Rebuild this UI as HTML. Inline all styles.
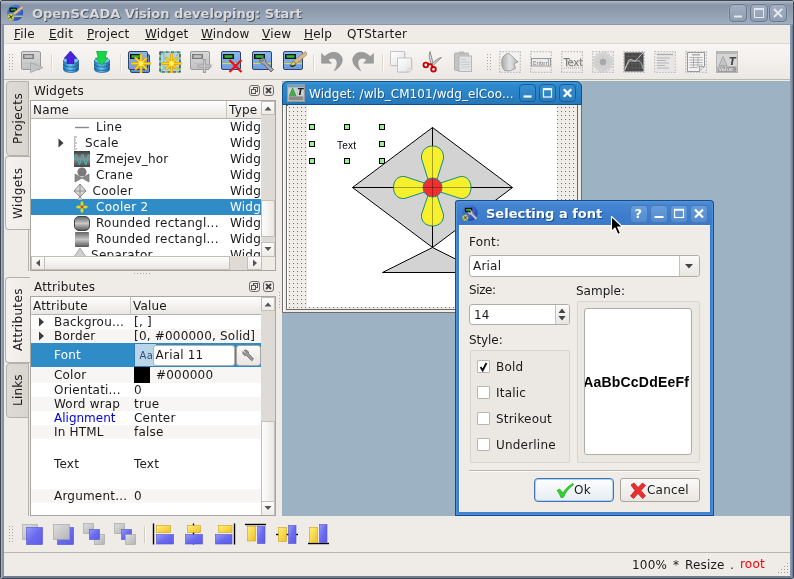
<!DOCTYPE html>
<html><head><meta charset="utf-8"><title>OpenSCADA Vision developing: Start</title>
<style>
html,body{margin:0;padding:0;}
body{will-change:transform;width:794px;height:579px;overflow:hidden;position:relative;background:#efebe7;font-family:"DejaVu Sans","Liberation Sans",sans-serif;font-size:12px;color:#1a1a1a;letter-spacing:0.2px;}
.a{position:absolute;box-sizing:border-box;}
.t{position:absolute;white-space:nowrap;line-height:14px;}
.vtab{position:absolute;box-sizing:border-box;border:1px solid #b4b0aa;border-right:none;border-radius:4px 0 0 4px;}
.vtab.in{background:linear-gradient(90deg,#dedad5,#d8d4ce);left:6px;width:23px;border-right:1px solid #b4b0aa;}
.vtab.act{background:linear-gradient(90deg,#f4f2f0,#efebe7);left:5px;width:25px;}
.vtxt{position:absolute;white-space:nowrap;line-height:14px;transform-origin:0 0;transform:rotate(-90deg);}
.tree{position:absolute;box-sizing:border-box;border:1px solid #a9a59f;background:#fff;overflow:hidden;}
.hdr{position:absolute;left:0;top:0;height:17px;background:linear-gradient(#ffffff,#f4f2f0 50%,#e9e6e2);border-bottom:1px solid #b5b1ab;}
.hsep{position:absolute;top:0;width:1px;height:17px;background:#c8c4be;}
.row{position:absolute;left:0;}
.sel{background:#308cc6;}
.alt{background:#f7f6f5;}
.sb{position:absolute;background:#dedad5;}
.sbtn{position:absolute;box-sizing:border-box;border:1px solid #c2beb8;background:linear-gradient(#fdfdfc,#eeebe8);}
.sthumbv{position:absolute;box-sizing:border-box;border:1px solid #c2beb8;background:linear-gradient(90deg,#fdfdfc,#ebe8e4);}
.sthumbh{position:absolute;box-sizing:border-box;border:1px solid #c2beb8;background:linear-gradient(#fdfdfc,#ebe8e4);}
.dbtn{position:absolute;box-sizing:border-box;width:11px;height:11px;border:1px solid #6e6e6e;border-radius:3px;background:#efebe7;}
.mi u{text-decoration:underline;}
.wbtn{position:absolute;box-sizing:border-box;border-radius:3px;}
.cb{position:absolute;box-sizing:border-box;width:13px;height:13px;border:1px solid #b9b5af;background:#fff;border-radius:1px;}
.grp{position:absolute;box-sizing:border-box;border:1px solid #d8d4ce;background:#ebe7e3;border-radius:2px;}
.btn{position:absolute;box-sizing:border-box;border:1px solid #a9a59f;border-radius:3px;background:linear-gradient(#fbfaf9,#e9e6e2);}

</style></head><body>
<div class="a" style="left:0px;top:0px;width:794px;height:579px;background:#3f4753;border-radius:2px;"></div>
<div class="a" style="left:1px;top:1px;width:792px;height:577px;background:linear-gradient(90deg,#a8b6c8 0,#93a1b6 1px,#8090a6 2px,#8090a6 calc(100% - 3px),#98a7bb calc(100% - 2px),#6f7d92 calc(100% - 1px));"></div>
<div class="a" style="left:3px;top:570px;width:788px;height:8px;background:linear-gradient(#8090a6 0,#8090a6 5px,#98a6bb 5px,#98a6bb 6px,#6f7d91 6px,#6f7d91 7px,#6f7d91 8px);"></div>
<div class="a" style="left:1px;top:1px;width:792px;height:24px;background:linear-gradient(#b0bccb 0,#a0acbd 1.500px,#8c98a9 3.500px,#8995a7 5px,#9eacbf 22.500px,#9eacbf 23px,#8a97ab 23px);"></div>
<div class="t " style="left:32px;top:6px;font-weight:bold;font-size:13px;color:#d9d9d9;text-shadow:1px 1px 0 #4a5565;line-height:16px;letter-spacing:0;">OpenSCADA Vision developing: Start</div>
<svg class="a" style="left:6px;top:4px;" width="20" height="18" viewBox="0 0 20 18"><defs><radialGradient id="gapp" cx="0.400" cy="0.300" r="0.800"><stop offset="0" stop-color="#5a8cf0"/><stop offset="1" stop-color="#2048c0"/></radialGradient></defs><circle cx="9.200" cy="8.800" r="8" fill="url(#gapp)"/><rect x="3.500" y="3.500" width="7.500" height="4.500" rx="0.500" fill="#0c0c0c"/><rect x="4.800" y="4.800" width="5" height="1.800" fill="#22b422"/><path d="M7 12.200h9.500" stroke="#e0e050" stroke-width="1.200"/><path d="M16 2l1.300 2-8.500 7-1.800-2z" fill="#e0bc8a" stroke="#a88a58" stroke-width="0.400"/><circle cx="4.700" cy="13" r="3.500" fill="#c8d060" stroke="#8a9438" stroke-width="0.500"/><path d="M2.500 14.500l4.500-3M3.500 11l2.500 4" stroke="#333" stroke-width="0.900"/></svg>
<div class="a" style="left:729px;top:4px;width:18px;height:18px;border:1px solid #6b798f;border-radius:4px;background:linear-gradient(#a3afc1,#909eb3);box-shadow:0 0 0 0.500px #a7b3c4;"></div>
<div class="a" style="left:750px;top:4px;width:18px;height:18px;border:1px solid #6b798f;border-radius:4px;background:linear-gradient(#a3afc1,#909eb3);box-shadow:0 0 0 0.500px #a7b3c4;"></div>
<div class="a" style="left:769px;top:4px;width:18px;height:18px;border:1px solid #6b798f;border-radius:4px;background:linear-gradient(#a3afc1,#909eb3);box-shadow:0 0 0 0.500px #a7b3c4;"></div>
<svg class="a" style="left:729px;top:4px;" width="18" height="18" viewBox="0 0 18 18"><path d="M5 12.5h8" stroke="#e4e8ee" stroke-width="2" fill="none"/></svg>
<svg class="a" style="left:750px;top:4px;" width="18" height="18" viewBox="0 0 18 18"><rect x="4.5" y="4.5" width="9" height="9" stroke="#e4e8ee" stroke-width="1" fill="none"/><path d="M4 5h10" stroke="#e4e8ee" stroke-width="2"/></svg>
<svg class="a" style="left:769px;top:4px;" width="18" height="18" viewBox="0 0 18 18"><path d="M5 5l8 8M13 5l-8 8" stroke="#e4e8ee" stroke-width="2" fill="none"/></svg>
<div class="a" style="left:4px;top:25px;width:786px;height:551px;background:#efebe7;"></div>
<div class="a" style="left:4px;top:25px;width:786px;height:19px;background:#efebe7;border-bottom:1px solid #dcd8d2;"></div>
<div class="t mi" style="left:14px;top:27px;"><u>F</u>ile</div>
<div class="t mi" style="left:49px;top:27px;"><u>E</u>dit</div>
<div class="t mi" style="left:87px;top:27px;"><u>P</u>roject</div>
<div class="t mi" style="left:145px;top:27px;"><u>W</u>idget</div>
<div class="t mi" style="left:201px;top:27px;"><u>W</u>indow</div>
<div class="t mi" style="left:262px;top:27px;"><u>V</u>iew</div>
<div class="t mi" style="left:304px;top:27px;"><u>H</u>elp</div>
<div class="t mi" style="left:347px;top:27px;">QTStarter</div>
<div class="a" style="left:4px;top:44px;width:786px;height:36px;background:linear-gradient(#f8f6f4,#ece8e4);border-bottom:1px solid #bcb8b2;"></div>
<svg class="a" style="left:9px;top:54px;" width="5" height="17" viewBox="0 0 5 17"><rect x="0" y="0" width="1" height="1" fill="#a8a49e"/><rect x="3" y="0" width="1" height="1" fill="#a8a49e"/><rect x="0" y="3" width="1" height="1" fill="#a8a49e"/><rect x="3" y="3" width="1" height="1" fill="#a8a49e"/><rect x="0" y="6" width="1" height="1" fill="#a8a49e"/><rect x="3" y="6" width="1" height="1" fill="#a8a49e"/><rect x="0" y="9" width="1" height="1" fill="#a8a49e"/><rect x="3" y="9" width="1" height="1" fill="#a8a49e"/><rect x="0" y="12" width="1" height="1" fill="#a8a49e"/><rect x="3" y="12" width="1" height="1" fill="#a8a49e"/><rect x="0" y="15" width="1" height="1" fill="#a8a49e"/><rect x="3" y="15" width="1" height="1" fill="#a8a49e"/></svg>
<svg class="a" style="left:487px;top:54px;" width="5" height="17" viewBox="0 0 5 17"><rect x="0" y="0" width="1" height="1" fill="#a8a49e"/><rect x="3" y="0" width="1" height="1" fill="#a8a49e"/><rect x="0" y="3" width="1" height="1" fill="#a8a49e"/><rect x="3" y="3" width="1" height="1" fill="#a8a49e"/><rect x="0" y="6" width="1" height="1" fill="#a8a49e"/><rect x="3" y="6" width="1" height="1" fill="#a8a49e"/><rect x="0" y="9" width="1" height="1" fill="#a8a49e"/><rect x="3" y="9" width="1" height="1" fill="#a8a49e"/><rect x="0" y="12" width="1" height="1" fill="#a8a49e"/><rect x="3" y="12" width="1" height="1" fill="#a8a49e"/><rect x="0" y="15" width="1" height="1" fill="#a8a49e"/><rect x="3" y="15" width="1" height="1" fill="#a8a49e"/></svg>
<div class="a" style="left:51px;top:54px;width:1px;height:17px;background:#dcd8d2;"></div>
<div class="a" style="left:52px;top:54px;width:1px;height:17px;background:#fbfaf9;"></div>
<div class="a" style="left:120px;top:54px;width:1px;height:17px;background:#dcd8d2;"></div>
<div class="a" style="left:121px;top:54px;width:1px;height:17px;background:#fbfaf9;"></div>
<div class="a" style="left:313px;top:54px;width:1px;height:17px;background:#dcd8d2;"></div>
<div class="a" style="left:314px;top:54px;width:1px;height:17px;background:#fbfaf9;"></div>
<div class="a" style="left:382px;top:54px;width:1px;height:17px;background:#dcd8d2;"></div>
<div class="a" style="left:383px;top:54px;width:1px;height:17px;background:#fbfaf9;"></div>
<svg width="0" height="0" style="position:absolute"><defs>
<linearGradient id="gcyl" x1="0" y1="0" x2="1" y2="0"><stop offset="0" stop-color="#1d78b8"/><stop offset="0.45" stop-color="#6cc4f0"/><stop offset="1" stop-color="#1766a4"/></linearGradient>
<radialGradient id="gstar" cx="0.5" cy="0.5" r="0.5"><stop offset="0" stop-color="#fff27a"/><stop offset="0.5" stop-color="#ffd21a"/><stop offset="1" stop-color="#e09a00"/></radialGradient>
<linearGradient id="gblue" x1="0" y1="0" x2="0" y2="1"><stop offset="0" stop-color="#8fb8f0"/><stop offset="1" stop-color="#6d9ce0"/></linearGradient>
<linearGradient id="ggray" x1="0" y1="0" x2="0" y2="1"><stop offset="0" stop-color="#d8d8d8"/><stop offset="1" stop-color="#c2c2c2"/></linearGradient>
<linearGradient id="gpage" x1="0" y1="0" x2="1" y2="1"><stop offset="0" stop-color="#ffffff"/><stop offset="1" stop-color="#e4e4e4"/></linearGradient>
<linearGradient id="gsq" x1="0" y1="0" x2="1" y2="1"><stop offset="0" stop-color="#9a9af8"/><stop offset="0.5" stop-color="#6a6af0"/><stop offset="1" stop-color="#5a5ae6"/></linearGradient>
<linearGradient id="ggsq" x1="0" y1="0" x2="1" y2="1"><stop offset="0" stop-color="#dedede"/><stop offset="1" stop-color="#b4b4b4"/></linearGradient>
<linearGradient id="gyel" x1="0" y1="0" x2="1" y2="1"><stop offset="0" stop-color="#fff080"/><stop offset="1" stop-color="#f0c020"/></linearGradient>
</defs></svg>
<svg class="a" style="left:21px;top:51px;" width="23" height="22" viewBox="0 0 23 22"><rect x="0.5" y="0.5" width="19" height="18" rx="1.5" fill="url(#ggray)" stroke="#9a9a9a"/><rect x="2" y="3" width="11" height="5" fill="#7c7c7c"/><rect x="3.5" y="4.2" width="8" height="2.6" fill="#c4c4c4"/><path d="M4 12.5h12" stroke="#bdbdbd" stroke-width="1"/><path d="M9.5 11.5v10l12.5-5z" fill="#c4c4c4" stroke="#a4a4a4" stroke-width="0.8"/></svg>
<svg class="a" style="left:63px;top:51px;" width="16" height="22" viewBox="0 0 16 22"><path d="M0.500 9.500v9c0 4 15 4 15 0v-9z" fill="url(#gcyl)" stroke="#14578c" stroke-width="0.600"/><ellipse cx="8" cy="9.500" rx="7.500" ry="3" fill="#7cc8f0" stroke="#14578c" stroke-width="0.500"/><path d="M0.500 13c0 4 15 4 15 0M0.500 16.500c0 4 15 4 15 0" stroke="#0e4a7c" stroke-width="0.800" fill="none" opacity="0.800"/><path d="M7.500 0l6.300 7.300h-2.800v5.200h-7v-5.200h-2.800z" fill="#4a22e0" stroke="#3010a8" stroke-width="0.600"/></svg>
<svg class="a" style="left:94px;top:51px;" width="16" height="22" viewBox="0 0 16 22"><path d="M0.500 9.500v9c0 4 15 4 15 0v-9z" fill="url(#gcyl)" stroke="#14578c" stroke-width="0.600"/><ellipse cx="8" cy="9.500" rx="7.500" ry="3" fill="#7cc8f0" stroke="#14578c" stroke-width="0.500"/><path d="M0.500 13c0 4 15 4 15 0M0.500 16.500c0 4 15 4 15 0" stroke="#0e4a7c" stroke-width="0.800" fill="none" opacity="0.800"/><path d="M2.500 0h10.500l-1.800 7h2.800l-6.300 7.300-6.300-7.300h2.800z" fill="#1ad44a" stroke="#0a9a2c" stroke-width="0.600"/></svg>
<svg class="a" style="left:128px;top:51px;" width="23" height="22" viewBox="0 0 23 22"><rect x="2.500" y="3.500" width="19" height="18" rx="1.500" fill="#5f8fd8" stroke="#2d4468"/><rect x="0.5" y="0.5" width="19" height="18" rx="1.5" fill="url(#gblue)" stroke="#2d4468"/><rect x="2" y="3" width="11" height="5" fill="#141414"/><rect x="3.5" y="4.2" width="8" height="2.6" fill="#2fb82f"/><path d="M13.00 12.50L21.80 12.50M13.00 12.50L18.23 17.73M13.00 12.50L13.00 21.30M13.00 12.50L7.77 17.73M13.00 12.50L4.20 12.50M13.00 12.50L7.77 7.27M13.00 12.50L13.00 3.70M13.00 12.50L18.23 7.27" stroke="#e09c00" stroke-width="2.8" stroke-linecap="round" fill="none"/><path d="M13.00 12.50L21.80 12.50M13.00 12.50L18.23 17.73M13.00 12.50L13.00 21.30M13.00 12.50L7.77 17.73M13.00 12.50L4.20 12.50M13.00 12.50L7.77 7.27M13.00 12.50L13.00 3.70M13.00 12.50L18.23 7.27" stroke="#ffd820" stroke-width="1.5" stroke-linecap="round" fill="none"/><circle cx="13" cy="12.5" r="2.4" fill="#fff06a"/></svg>
<svg class="a" style="left:159px;top:51px;" width="23" height="22" viewBox="0 0 23 22"><rect x="1" y="1" width="20" height="20" fill="#a9d4de" opacity="0.9"/><path d="M1 5l4-4M1 21l4-4M17 5l4-4M5 1v16M5 17h16M5 17l-4 4" stroke="#7aaab8" stroke-width="0.8" fill="none"/><rect x="1" y="1" width="20" height="20" fill="none" stroke="#223" stroke-width="1.2" stroke-dasharray="3 2.500"/><rect x="1" y="1" width="20" height="20" fill="none" stroke="#18c838" stroke-width="1.2" stroke-dasharray="2 3.500" stroke-dashoffset="-3"/><path d="M12.50 12.50L21.30 12.50M12.50 12.50L17.73 17.73M12.50 12.50L12.50 21.30M12.50 12.50L7.27 17.73M12.50 12.50L3.70 12.50M12.50 12.50L7.27 7.27M12.50 12.50L12.50 3.70M12.50 12.50L17.73 7.27" stroke="#e09c00" stroke-width="2.8" stroke-linecap="round" fill="none"/><path d="M12.50 12.50L21.30 12.50M12.50 12.50L17.73 17.73M12.50 12.50L12.50 21.30M12.50 12.50L7.27 17.73M12.50 12.50L3.70 12.50M12.50 12.50L7.27 7.27M12.50 12.50L12.50 3.70M12.50 12.50L17.73 7.27" stroke="#ffd820" stroke-width="1.5" stroke-linecap="round" fill="none"/><circle cx="12.5" cy="12.5" r="2.4" fill="#fff06a"/></svg>
<svg class="a" style="left:190px;top:51px;" width="23" height="22" viewBox="0 0 23 22"><rect x="0.5" y="0.5" width="19" height="18" rx="1.5" fill="url(#ggray)" stroke="#9a9a9a"/><rect x="2" y="3" width="11" height="5" fill="#7c7c7c"/><rect x="3.5" y="4.2" width="8" height="2.6" fill="#c4c4c4"/><path d="M4 12.500h8" stroke="#bdbdbd"/><path d="M14.500 8v14M7.500 15h14" stroke="#a0a0a0" stroke-width="3.200"/><path d="M14.500 9v12M8.500 15h12" stroke="#c6c6c6" stroke-width="1.400"/></svg>
<svg class="a" style="left:221px;top:51px;" width="23" height="22" viewBox="0 0 23 22"><rect x="0.5" y="0.5" width="19" height="18" rx="1.5" fill="url(#gblue)" stroke="#2d4468"/><rect x="2" y="3" width="11" height="5" fill="#141414"/><rect x="3.5" y="4.2" width="8" height="2.6" fill="#2fb82f"/><path d="M1 12.500h18" stroke="#d8d840" stroke-width="1.200"/><path d="M8.500 9l12 12M20.500 9l-12 12" stroke="#e81010" stroke-width="2.200"/></svg>
<svg class="a" style="left:252px;top:51px;" width="23" height="22" viewBox="0 0 23 22"><rect x="0.5" y="0.5" width="19" height="18" rx="1.5" fill="url(#gblue)" stroke="#2d4468"/><rect x="2" y="3" width="11" height="5" fill="#141414"/><rect x="3.5" y="4.2" width="8" height="2.6" fill="#2fb82f"/><path d="M1 12.500h18" stroke="#d8d840" stroke-width="1.200"/><path d="M8 8.500a3.200 3.200 0 0 0 3.500 4.500l7.500 8 2.500-2.500-8-7.500a3.200 3.200 0 0 0-4-4l2 2.200-1.500 1.500z" fill="#a8a8a8" stroke="#585858" stroke-width="0.800"/></svg>
<svg class="a" style="left:283px;top:51px;" width="24" height="22" viewBox="0 0 24 22"><rect x="0.5" y="0.5" width="19" height="18" rx="1.5" fill="url(#gblue)" stroke="#2d4468"/><rect x="2" y="3" width="11" height="5" fill="#141414"/><rect x="3.5" y="4.2" width="8" height="2.6" fill="#2fb82f"/><path d="M1 12.500h18" stroke="#d8d840" stroke-width="1.200"/><path d="M22.500 0.500l1.500 3-11 9.500-2.500-3z" fill="#dcb888" stroke="#9a7a50" stroke-width="0.600"/><path d="M10.500 10l2.500 3-2.500 1.500-3 0.500 1-2.500z" fill="#d8d050" stroke="#555" stroke-width="0.600"/><path d="M7 14.500l2.500 1 3-1.500" stroke="#222" stroke-width="1.300" fill="none"/></svg>
<svg class="a" style="left:321px;top:51px;" width="22" height="21" viewBox="0 0 22 21"><path d="M0.500 2.500L0.500 12.200L10.500 12.200L7.300 9C10 6.200 14.800 6.500 15.800 10.200C16.500 13 15.500 16 13.300 19.800C19.500 16 22.500 11 20.800 6.300C18.500 0.500 10 -1 3.800 5.500Z" fill="#9b9b9b" stroke="#8c8c8c" stroke-width="0.500"/></svg>
<svg class="a" style="left:352px;top:51px;" width="22" height="21" viewBox="0 0 22 21"><g transform="translate(22,0) scale(-1,1)"><path d="M0.500 2.500L0.500 12.200L10.500 12.200L7.300 9C10 6.200 14.800 6.500 15.800 10.200C16.500 13 15.500 16 13.300 19.800C19.500 16 22.500 11 20.800 6.300C18.500 0.500 10 -1 3.800 5.500Z" fill="#9b9b9b" stroke="#8c8c8c" stroke-width="0.500"/></g></svg>
<svg class="a" style="left:390px;top:51px;" width="23" height="22" viewBox="0 0 23 22"><g><path d="M1.500 1.500h14v10.500l-3.500 3.500h-10.500z" fill="#b8b8b8" opacity="0.450"/><path d="M0.500 0.500h14v10.500l-3.500 3.500h-10.500z" fill="url(#gpage)" stroke="#c4c4c4" stroke-width="1"/><path d="M14.500 11h-3.500v3.500" fill="#f4f4f4" stroke="#c4c4c4" stroke-width="0.700"/></g><g transform="translate(7,6.500)"><path d="M1.500 1.500h14v10.500l-3.500 3.500h-10.500z" fill="#b8b8b8" opacity="0.450"/><path d="M0.500 0.500h14v10.500l-3.500 3.500h-10.500z" fill="url(#gpage)" stroke="#c4c4c4" stroke-width="1"/><path d="M14.500 11h-3.500v3.500" fill="#f4f4f4" stroke="#c4c4c4" stroke-width="0.700"/></g></svg>
<svg class="a" style="left:422px;top:51px;" width="22" height="22" viewBox="0 0 22 22"><path d="M8 0.500c-1.500 4-0.500 8 1.500 13l1.500-1.500c-1-4-2-8-3-11.500z" fill="#d8d8d8" stroke="#6a6a6a" stroke-width="0.700"/><path d="M19.500 6.500c-4 1-7 3.500-10 7l1.500 1.200c2.500-3 5.500-5.500 8.500-8.200z" fill="#d0d0d0" stroke="#6a6a6a" stroke-width="0.700"/><circle cx="3.800" cy="14" r="2.300" fill="none" stroke="#cc0000" stroke-width="1.800"/><circle cx="11.500" cy="18.300" r="2.300" fill="none" stroke="#cc0000" stroke-width="1.800"/><path d="M5.800 13l4 0.500M10.300 16.200l-0.500-2.700" stroke="#cc0000" stroke-width="1.800"/></svg>
<svg class="a" style="left:454px;top:51px;" width="19" height="22" viewBox="0 0 19 22"><rect x="0.500" y="2" width="14" height="17.500" rx="1" fill="#c4c4c4" stroke="#b0b0b0"/><rect x="5" y="0.500" width="5" height="3" fill="#b8b8b8"/><rect x="5" y="5" width="12.500" height="15.500" fill="#e2e2e2" stroke="#b8b8b8"/><path d="M7 8.500h5M7 11h8.500M7 13.500h8.500M7 16h8.500" stroke="#c8c8c8" stroke-width="0.800"/></svg>
<svg class="a" style="left:499px;top:51px;" width="22" height="22" viewBox="0 0 22 22"><rect x="0.700" y="0.700" width="20.600" height="20.600" fill="none" stroke="#bdbdbd" stroke-width="1.300" stroke-dasharray="1.500 1.440"/><defs><linearGradient id="gsh" x1="0" y1="0" x2="1" y2="0"><stop offset="0" stop-color="#aaa"/><stop offset="0.500" stop-color="#e2e2e2"/><stop offset="1" stop-color="#b4b4b4"/></linearGradient></defs><path d="M10 2.500l9 8.500-4 1.500 1.500 5-6 2.500-5-0.500c-3-3.500-3.500-8.500-2-12.500 1.500-3 4-4.500 6.500-4.500z" fill="url(#gsh)" stroke="#909090" stroke-width="0.800"/></svg>
<svg class="a" style="left:530px;top:51px;" width="22" height="22" viewBox="0 0 22 22"><rect x="0.700" y="0.700" width="20.600" height="20.600" fill="none" stroke="#bdbdbd" stroke-width="1.300" stroke-dasharray="1.500 1.440"/><rect x="1.500" y="7.500" width="19" height="7.500" fill="#ececec" stroke="#9a9a9a"/><path d="M18.500 8v7" stroke="#aaa"/><text x="3" y="13.600" font-family="DejaVu Sans, sans-serif" font-size="5.500" fill="#777" letter-spacing="0">Enter</text></svg>
<svg class="a" style="left:561px;top:51px;" width="22" height="22" viewBox="0 0 22 22"><rect x="0.700" y="0.700" width="20.600" height="20.600" fill="none" stroke="#bdbdbd" stroke-width="1.300" stroke-dasharray="1.500 1.440"/><text x="3.500" y="16" font-family="DejaVu Sans, sans-serif" font-size="10" fill="#cfcfcf" letter-spacing="-0.300">Text</text><text x="2.500" y="15" font-family="DejaVu Sans, sans-serif" font-size="10" fill="#7a7a7a" letter-spacing="-0.300">Text</text><path d="M3 17h17" stroke="#9a9a9a" stroke-width="0.800" stroke-dasharray="1 1"/></svg>
<svg class="a" style="left:592px;top:51px;" width="22" height="22" viewBox="0 0 22 22"><rect x="0.700" y="0.700" width="20.600" height="20.600" fill="none" stroke="#bdbdbd" stroke-width="1.300" stroke-dasharray="1.500 1.440"/><ellipse cx="11" cy="4.800" rx="1.300" ry="4.500" fill="#d4d4d4" stroke="#bcbcbc" stroke-width="0.300" transform="rotate(0 11 11)"/><ellipse cx="11" cy="4.800" rx="1.300" ry="4.500" fill="#d4d4d4" stroke="#bcbcbc" stroke-width="0.300" transform="rotate(20 11 11)"/><ellipse cx="11" cy="4.800" rx="1.300" ry="4.500" fill="#d4d4d4" stroke="#bcbcbc" stroke-width="0.300" transform="rotate(40 11 11)"/><ellipse cx="11" cy="4.800" rx="1.300" ry="4.500" fill="#d4d4d4" stroke="#bcbcbc" stroke-width="0.300" transform="rotate(60 11 11)"/><ellipse cx="11" cy="4.800" rx="1.300" ry="4.500" fill="#d4d4d4" stroke="#bcbcbc" stroke-width="0.300" transform="rotate(80 11 11)"/><ellipse cx="11" cy="4.800" rx="1.300" ry="4.500" fill="#d4d4d4" stroke="#bcbcbc" stroke-width="0.300" transform="rotate(100 11 11)"/><ellipse cx="11" cy="4.800" rx="1.300" ry="4.500" fill="#d4d4d4" stroke="#bcbcbc" stroke-width="0.300" transform="rotate(120 11 11)"/><ellipse cx="11" cy="4.800" rx="1.300" ry="4.500" fill="#d4d4d4" stroke="#bcbcbc" stroke-width="0.300" transform="rotate(140 11 11)"/><ellipse cx="11" cy="4.800" rx="1.300" ry="4.500" fill="#d4d4d4" stroke="#bcbcbc" stroke-width="0.300" transform="rotate(160 11 11)"/><ellipse cx="11" cy="4.800" rx="1.300" ry="4.500" fill="#d4d4d4" stroke="#bcbcbc" stroke-width="0.300" transform="rotate(180 11 11)"/><ellipse cx="11" cy="4.800" rx="1.300" ry="4.500" fill="#d4d4d4" stroke="#bcbcbc" stroke-width="0.300" transform="rotate(200 11 11)"/><ellipse cx="11" cy="4.800" rx="1.300" ry="4.500" fill="#d4d4d4" stroke="#bcbcbc" stroke-width="0.300" transform="rotate(220 11 11)"/><ellipse cx="11" cy="4.800" rx="1.300" ry="4.500" fill="#d4d4d4" stroke="#bcbcbc" stroke-width="0.300" transform="rotate(240 11 11)"/><ellipse cx="11" cy="4.800" rx="1.300" ry="4.500" fill="#d4d4d4" stroke="#bcbcbc" stroke-width="0.300" transform="rotate(260 11 11)"/><ellipse cx="11" cy="4.800" rx="1.300" ry="4.500" fill="#d4d4d4" stroke="#bcbcbc" stroke-width="0.300" transform="rotate(280 11 11)"/><ellipse cx="11" cy="4.800" rx="1.300" ry="4.500" fill="#d4d4d4" stroke="#bcbcbc" stroke-width="0.300" transform="rotate(300 11 11)"/><ellipse cx="11" cy="4.800" rx="1.300" ry="4.500" fill="#d4d4d4" stroke="#bcbcbc" stroke-width="0.300" transform="rotate(320 11 11)"/><ellipse cx="11" cy="4.800" rx="1.300" ry="4.500" fill="#d4d4d4" stroke="#bcbcbc" stroke-width="0.300" transform="rotate(340 11 11)"/><circle cx="11" cy="11" r="3.200" fill="#a8a8a8"/></svg>
<svg class="a" style="left:623px;top:51px;" width="22" height="22" viewBox="0 0 22 22"><rect x="0.700" y="0.700" width="20.600" height="20.600" fill="none" stroke="#bdbdbd" stroke-width="1.300" stroke-dasharray="1.500 1.440"/><rect x="1.500" y="1.500" width="19" height="19" fill="#484848"/><path d="M5.3 1.500v19M1.500 5.3h19" stroke="#6a6a6a" stroke-width="0.500"/><path d="M9.1 1.500v19M1.500 9.1h19" stroke="#6a6a6a" stroke-width="0.500"/><path d="M12.9 1.500v19M1.500 12.9h19" stroke="#6a6a6a" stroke-width="0.500"/><path d="M16.7 1.500v19M1.500 16.7h19" stroke="#6a6a6a" stroke-width="0.500"/><path d="M2 17c2-2 3-8 5-8.500s3 2 5 1.500 5-6 8-8" stroke="#d8d8d8" stroke-width="0.900" fill="none"/><path d="M2 19c2-6 4-9 6-9s6 0 8 0 3 4 4 8" stroke="#bdbdbd" stroke-width="0.900" fill="none"/></svg>
<svg class="a" style="left:654px;top:51px;" width="22" height="22" viewBox="0 0 22 22"><rect x="0.700" y="0.700" width="20.600" height="20.600" fill="none" stroke="#bdbdbd" stroke-width="1.300" stroke-dasharray="1.500 1.440"/><rect x="1.500" y="1.500" width="19" height="19" fill="#e6e6e6"/><path d="M3 3.500h16" stroke="#aaa" stroke-width="1.200"/><path d="M3 7h13M3 9.500h9M3 12h12M3 14.500h8M3 17h12" stroke="#b4b4b4" stroke-width="1"/></svg>
<svg class="a" style="left:685px;top:51px;" width="22" height="22" viewBox="0 0 22 22"><rect x="0.700" y="0.700" width="20.600" height="20.600" fill="none" stroke="#bdbdbd" stroke-width="1.300" stroke-dasharray="1.500 1.440"/><path d="M2.500 1.500h17v14l-5 5h-12z" fill="#f2f2f2" stroke="#8e8e8e" stroke-width="0.900"/><path d="M19.500 15.500h-5v5" fill="#dcdcdc" stroke="#8e8e8e" stroke-width="0.700"/><path d="M4.500 6.500h13M4.500 9h13M4.500 11.500h13M4.500 14h13M4.500 16.500h8M8.500 6.500v10M13 6.500v10" stroke="#9a9a9a" stroke-width="0.700"/><path d="M7 3.800h8" stroke="#999" stroke-width="1.200"/></svg>
<svg class="a" style="left:716px;top:51px;" width="22" height="22" viewBox="0 0 22 22"><rect x="0.500" y="0.500" width="21" height="21" fill="#d6d6d6" stroke="#b4b4b4"/><rect x="1" y="1" width="20" height="2" fill="#b8b8b8"/><path d="M7 5.500l-4 9h8z" fill="#c6c6c6" stroke="#9c9c9c" stroke-width="0.800"/><text x="13" y="14" font-family="DejaVu Sans, sans-serif" font-size="10" font-weight="bold" font-style="italic" fill="#4a4a4a">T</text><rect x="1.500" y="15.500" width="19" height="5.500" fill="#9c9c9c"/><text x="2.200" y="20.300" font-family="DejaVu Sans, sans-serif" font-size="5.500" fill="#f0f0f0" letter-spacing="0">Value</text></svg>
<div class="a" style="left:282px;top:81px;width:508px;height:435px;background:#9db3c4;"></div>
<div class="a" style="left:28px;top:229px;width:1px;height:42px;background:#b4b0aa;"></div>
<div class="a" style="left:28px;top:417px;width:1px;height:99px;background:#b4b0aa;"></div>
<div class="vtab in" style="top:81px;height:75px"></div>
<div class="vtab act" style="top:156px;height:74px"></div>
<div class="vtxt" style="left:11.3px;top:144px;letter-spacing:0.5px">Projects</div>
<div class="vtxt" style="left:11.3px;top:218.5px;letter-spacing:0.4px">Widgets</div>
<div class="vtab act" style="top:277px;height:86px"></div>
<div class="vtab in" style="top:363px;height:55px"></div>
<div class="vtxt" style="left:11.3px;top:351px;letter-spacing:0.35px">Attributes</div>
<div class="vtxt" style="left:11.3px;top:406px">Links</div>
<div class="t " style="left:34px;top:84px;">Widgets</div>
<div class="dbtn" style="left:249px;top:85px"></div>
<div class="dbtn" style="left:263px;top:85px"></div>
<svg class="a" style="left:249px;top:85px;" width="11" height="11" viewBox="0 0 11 11"><rect x="4.5" y="2.5" width="4" height="4" fill="none" stroke="#555" stroke-width="1"/><rect x="2.5" y="4.5" width="4" height="4" fill="#efebe7" stroke="#555" stroke-width="1"/></svg>
<svg class="a" style="left:263px;top:85px;" width="11" height="11" viewBox="0 0 11 11"><path d="M3 3l5 5M8 3l-5 5" stroke="#444" stroke-width="1.8" fill="none"/></svg>
<div class="tree" style="left:30px;top:100px;width:246px;height:171px">
<div class="hdr" style="width:230px"></div><div class="hsep" style="left:195px"></div>
<div class="t " style="left:2px;top:2px;">Name</div>
<div class="t " style="left:198px;top:2px;">Type</div>
<div class="row sel" style="left:0px;top:98px;width:230px;height:16px;"></div>
<div class="t " style="left:65px;top:19px;letter-spacing:0.28px;">Line</div>
<div class="t " style="left:199px;top:19px;">Widg</div>
<div class="t " style="left:54px;top:35px;letter-spacing:0.28px;">Scale</div>
<div class="t " style="left:199px;top:35px;">Widg</div>
<div class="t " style="left:65px;top:51px;letter-spacing:0.12px;">Zmejev_hor</div>
<div class="t " style="left:199px;top:51px;">Widg</div>
<div class="t " style="left:65px;top:67px;letter-spacing:0.28px;">Crane</div>
<div class="t " style="left:199px;top:67px;">Widg</div>
<div class="t " style="left:61.5px;top:83px;letter-spacing:0.28px;">Cooler</div>
<div class="t " style="left:199px;top:83px;">Widg</div>
<div class="t " style="left:65px;top:99px;color:#fff;letter-spacing:0.28px;">Cooler 2</div>
<div class="t " style="left:199px;top:99px;color:#fff;">Widg</div>
<div class="t " style="left:65px;top:115px;letter-spacing:0.28px;">Rounded rectangl...</div>
<div class="t " style="left:199px;top:115px;">Widg</div>
<div class="t " style="left:65px;top:131px;letter-spacing:0.28px;">Rounded rectangl...</div>
<div class="t " style="left:199px;top:131px;">Widg</div>
<div class="t " style="left:60px;top:147px;letter-spacing:0.28px;">Separator</div>
<div class="t " style="left:199px;top:147px;">Widg</div>
<svg class="a" style="left:43px;top:18px;" width="16" height="16" viewBox="0 0 16 16"><path d="M1 8.5h14" stroke="#8a8a8a" stroke-width="1.4"/></svg>
<svg class="a" style="left:26px;top:37px;" width="8" height="10" viewBox="0 0 8 10"><path d="M1.5 0.5v9l5-4.5z" fill="#3c3c3c"/></svg>
<svg class="a" style="left:42px;top:34px;" width="6" height="16" viewBox="0 0 6 16"><path d="M1.5 1v14" stroke="#bbb" stroke-width="1"/><path d="M2 2h2M2 5h1M2 8h2M2 11h1M2 14h2" stroke="#999" stroke-width="1"/></svg>
<svg class="a" style="left:43px;top:50px;" width="16" height="16" viewBox="0 0 16 16"><defs><linearGradient id="zg" x1="0" y1="0" x2="0" y2="1"><stop offset="0" stop-color="#3c3c3c"/><stop offset="0.5" stop-color="#8e8e8e"/><stop offset="1" stop-color="#444"/></linearGradient></defs><rect width="16" height="16" fill="url(#zg)"/><path d="M0.500 9c1-7 2.300-7 3.300-1s2 7.500 3 1 2.300-7.500 3.300-1 2 7.500 3 1 1.800-6 2.500-3" stroke="#4fb0b0" stroke-width="1.200" fill="none"/></svg>
<svg class="a" style="left:43px;top:66px;" width="16" height="16" viewBox="0 0 16 16"><circle cx="8" cy="5" r="4.600" fill="#7a7a7a"/><path d="M1 7l14 8v-8l-14 8z" fill="#888" stroke="#666" stroke-width="0.6"/></svg>
<svg class="a" style="left:42px;top:82px;" width="14" height="17" viewBox="0 0 14 17"><path d="M7 1l6 7-6 6-6-6z" fill="#d6d6d6" stroke="#777" stroke-width="0.8"/><path d="M7 1v13M1 8h12" stroke="#777" stroke-width="0.7"/><path d="M7 14l-3 3h6z" fill="#d6d6d6" stroke="#777" stroke-width="0.6"/></svg>
<svg class="a" style="left:45px;top:100px;" width="12" height="12" viewBox="0 0 14 14"><g stroke="#b8cc20" stroke-width="0.400" fill="#d2e428"><ellipse cx="7" cy="3.3" rx="1.6" ry="3"/><ellipse cx="7" cy="10.7" rx="1.6" ry="3"/><ellipse cx="3.3" cy="7" rx="3" ry="1.6"/><ellipse cx="10.7" cy="7" rx="3" ry="1.6"/></g><circle cx="7" cy="7" r="1.7" fill="#e33"/></svg>
<svg class="a" style="left:43px;top:115px;" width="16" height="15" viewBox="0 0 16 15"><defs><linearGradient id="rg" x1="0" y1="0" x2="0" y2="1"><stop offset="0" stop-color="#666"/><stop offset="0.5" stop-color="#c8c8c8"/><stop offset="1" stop-color="#555"/></linearGradient></defs><rect x="0.5" y="0.5" width="15" height="14" rx="4.5" fill="url(#rg)" stroke="#444" stroke-width="1"/></svg>
<svg class="a" style="left:44px;top:131px;" width="14" height="15" viewBox="0 0 14 15"><rect x="0" y="0" width="14" height="15" rx="1" fill="url(#rg)"/></svg>
<svg class="a" style="left:42px;top:146px;" width="14" height="10" viewBox="0 0 14 10"><path d="M7 1l-6 9h12z" fill="#d0d0d0" stroke="#999" stroke-width="0.8"/></svg>
<div class="sb" style="left:230px;top:0px;width:14px;height:155px;"></div>
<div class="sbtn" style="left:230px;top:0px;width:14px;height:14px;"></div>
<div class="sthumbv" style="left:230px;top:99px;width:14px;height:37px;"></div>
<div class="sbtn" style="left:230px;top:141px;width:14px;height:15px;"></div>
<svg class="a" style="left:230px;top:0px;" width="14" height="14" viewBox="0 0 14 14"><path d="M3.5 9.5h7l-3.5-4z" fill="#555"/></svg>
<svg class="a" style="left:230px;top:141px;" width="14" height="15" viewBox="0 0 14 15"><path d="M3.5 5h7l-3.5 4z" fill="#555"/></svg>
<div class="sb" style="left:0px;top:155px;width:230px;height:14px;"></div>
<div class="sbtn" style="left:0px;top:155px;width:14px;height:14px;"></div>
<div class="sthumbh" style="left:13px;top:155px;width:186px;height:14px;"></div>
<div class="sbtn" style="left:216px;top:155px;width:15px;height:14px;"></div>
<svg class="a" style="left:0px;top:155px;" width="14" height="14" viewBox="0 0 14 14"><path d="M9 3.5v7l-4-3.5z" fill="#555"/></svg>
<svg class="a" style="left:216px;top:155px;" width="15" height="14" viewBox="0 0 15 14"><path d="M6 3.5v7l4-3.5z" fill="#555"/></svg>
<div class="a" style="left:230px;top:155px;width:14px;height:14px;background:#efebe7;border-left:1px solid #c2beb8;border-top:1px solid #c2beb8;"></div>
</div>
<svg class="a" style="left:134px;top:273px;" width="18" height="2" viewBox="0 0 18 2"><rect x="0" y="0" width="1" height="1" fill="#aaa"/><rect x="3" y="0" width="1" height="1" fill="#aaa"/><rect x="6" y="0" width="1" height="1" fill="#aaa"/><rect x="9" y="0" width="1" height="1" fill="#aaa"/><rect x="12" y="0" width="1" height="1" fill="#aaa"/><rect x="15" y="0" width="1" height="1" fill="#aaa"/></svg>
<svg class="a" style="left:279px;top:292px;" width="2" height="18" viewBox="0 0 2 18"><rect x="0" y="0" width="1" height="1" fill="#aaa"/><rect x="0" y="3" width="1" height="1" fill="#aaa"/><rect x="0" y="6" width="1" height="1" fill="#aaa"/><rect x="0" y="9" width="1" height="1" fill="#aaa"/><rect x="0" y="12" width="1" height="1" fill="#aaa"/><rect x="0" y="15" width="1" height="1" fill="#aaa"/></svg>
<div class="t " style="left:34px;top:280px;">Attributes</div>
<div class="dbtn" style="left:249px;top:281px"></div>
<div class="dbtn" style="left:263px;top:281px"></div>
<svg class="a" style="left:249px;top:281px;" width="11" height="11" viewBox="0 0 11 11"><rect x="4.5" y="2.5" width="4" height="4" fill="none" stroke="#555" stroke-width="1"/><rect x="2.5" y="4.5" width="4" height="4" fill="#efebe7" stroke="#555" stroke-width="1"/></svg>
<svg class="a" style="left:263px;top:281px;" width="11" height="11" viewBox="0 0 11 11"><path d="M3 3l5 5M8 3l-5 5" stroke="#444" stroke-width="1.8" fill="none"/></svg>
<div class="tree" style="left:30px;top:296px;width:246px;height:220px">
<div class="hdr" style="width:230px"></div><div class="hsep" style="left:99px"></div>
<div class="t " style="left:2px;top:2px;">Attribute</div>
<div class="t " style="left:102px;top:2px;">Value</div>
<div class="t " style="left:23px;top:18px;">Backgrou...</div>
<div class="t " style="left:103px;top:18px;">[, ]</div>
<div class="row alt" style="left:0px;top:32px;width:230px;height:14px;"></div>
<div class="t " style="left:23px;top:32px;">Border</div>
<div class="t " style="left:103px;top:32px;">[0, #000000, Solid]</div>
<div class="row sel" style="left:0px;top:46px;width:230px;height:24px;"></div>
<div class="t " style="left:23px;top:51px;color:#fff;">Font</div>
<div class="row alt" style="left:0px;top:70px;width:230px;height:16px;"></div>
<div class="t " style="left:23px;top:71px;">Color</div>
<div class="t " style="left:23px;top:86px;">Orientati...</div>
<div class="t " style="left:103px;top:86px;">0</div>
<div class="row alt" style="left:0px;top:100px;width:230px;height:14px;"></div>
<div class="t " style="left:23px;top:100px;">Word wrap</div>
<div class="t " style="left:103px;top:100px;">true</div>
<div class="t " style="left:23px;top:114px;color:#0000e0;letter-spacing:0;">Alignment</div>
<div class="t " style="left:103px;top:114px;">Center</div>
<div class="row alt" style="left:0px;top:128px;width:230px;height:14px;"></div>
<div class="t " style="left:23px;top:128px;">In HTML</div>
<div class="t " style="left:103px;top:128px;">false</div>
<div class="t " style="left:23px;top:160px;">Text</div>
<div class="t " style="left:103px;top:160px;">Text</div>
<div class="row alt" style="left:0px;top:192px;width:230px;height:14px;"></div>
<div class="t " style="left:23px;top:192px;">Argument...</div>
<div class="t " style="left:103px;top:192px;">0</div>
<div class="t " style="left:125px;top:71px;">#000000</div>
<div class="a" style="left:103px;top:70px;width:16px;height:16px;background:#000;"></div>
<svg class="a" style="left:7px;top:20px;" width="7" height="10" viewBox="0 0 7 10"><path d="M1 0.5v9l5-4.5z" fill="#3c3c3c"/></svg>
<svg class="a" style="left:7px;top:34px;" width="7" height="10" viewBox="0 0 7 10"><path d="M1 0.5v9l5-4.5z" fill="#3c3c3c"/></svg>
<div class="a" style="left:103px;top:46px;width:22px;height:24px;background:#b9d5eb;border:1px solid #2f7db5;border-right:none;"></div>
<div class="t " style="left:108.5px;top:52px;font-size:10px;color:#34506c;letter-spacing:0.4px;">Aa</div>
<div class="a" style="left:122px;top:48px;width:82px;height:21px;background:#fff;border:1px solid #b5b1ab;border-radius:3px;"></div>
<div class="t " style="left:124.6px;top:51px;">Arial 11</div>
<div class="btn" style="left:205px;top:48px;width:25px;height:21px;"></div>
<svg class="a" style="left:209px;top:50px;" width="17" height="17" viewBox="0 0 17 17"><path d="M4 3.5a3 3 0 0 1 4.5 3l5 5.5-1.8 1.8-5.2-5.3a3 3 0 0 1-3.5-4l2 2 1.5-1.5z" fill="#9a9a9a" stroke="#666" stroke-width="0.8"/></svg>
<div class="sb" style="left:230px;top:0px;width:14px;height:218px;"></div>
<div class="sbtn" style="left:230px;top:0px;width:14px;height:14px;"></div>
<div class="sthumbv" style="left:230px;top:124px;width:14px;height:82px;"></div>
<div class="sbtn" style="left:230px;top:204px;width:14px;height:15px;"></div>
<svg class="a" style="left:230px;top:0px;" width="14" height="14" viewBox="0 0 14 14"><path d="M3.5 9.5h7l-3.5-4z" fill="#555"/></svg>
<svg class="a" style="left:230px;top:204px;" width="14" height="15" viewBox="0 0 14 15"><path d="M3.5 5h7l-3.5 4z" fill="#555"/></svg>
</div>
<div class="a" style="left:282px;top:81px;width:300px;height:232px;background:#efebe7;border:1px solid #6e6e6e;border-radius:6px 6px 0 0;"></div>
<div class="a" style="left:283px;top:100px;width:1px;height:212px;background:#fff;"></div>
<div class="a" style="left:282px;top:81px;width:300px;height:24px;background:linear-gradient(#3c98d8 0,#2c8acc 3px,#2a82c4 60%,#2577b8 100%);border-radius:6px 6px 0 0;border:1px solid #125088;"></div>
<svg class="a" style="left:287px;top:84px;" width="18" height="18" viewBox="0 0 16 16"><rect x="0.5" y="0.5" width="15" height="15" fill="#cfcfcf" stroke="#9a9a9a"/><rect x="1" y="1" width="14" height="2" fill="#6aa0c8"/><path d="M5 3.5l-3 7h6z" fill="#3cb043" stroke="#2a8a30" stroke-width="0.5"/><text x="9.2" y="10" font-family="DejaVu Sans, sans-serif" font-size="8" font-weight="bold" font-style="italic" fill="#222">T</text><rect x="1.5" y="11" width="13" height="3.5" fill="#8a8a8a"/></svg>
<div class="t " style="left:309px;top:86px;color:#fff;font-size:12px;line-height:16px;text-shadow:1px 1px 0 #1b5a92;letter-spacing:0.06px;">Widget: /wlb_CM101/wdg_elCoo...</div>
<div class="a" style="left:519px;top:84px;width:17px;height:18px;border:1px solid #1c5c96;border-radius:4px;background:linear-gradient(#3590d2,#2a7cbc);"></div>
<div class="a" style="left:539px;top:84px;width:17px;height:18px;border:1px solid #1c5c96;border-radius:4px;background:linear-gradient(#3590d2,#2a7cbc);"></div>
<div class="a" style="left:559px;top:84px;width:17px;height:18px;border:1px solid #1c5c96;border-radius:4px;background:linear-gradient(#3590d2,#2a7cbc);"></div>
<svg class="a" style="left:519px;top:84px;" width="17" height="18" viewBox="0 0 17 18"><path d="M4.5 12.5h8" stroke="#fff" stroke-width="2.2"/></svg>
<svg class="a" style="left:539px;top:84px;" width="17" height="18" viewBox="0 0 17 18"><rect x="4.5" y="5" width="8" height="8" fill="none" stroke="#fff" stroke-width="1.2"/><path d="M4 5.2h9" stroke="#fff" stroke-width="2"/></svg>
<svg class="a" style="left:559px;top:84px;" width="17" height="18" viewBox="0 0 17 18"><path d="M4.8 5.3l7.4 7.4M12.2 5.3l-7.4 7.4" stroke="#fff" stroke-width="2.3"/></svg>
<div class="a" style="left:286px;top:105px;width:292px;height:205px;background:#efebe7;border:1px solid #6a6a6a;"></div>
<div class="a" style="left:287px;top:106px;width:290px;height:203px;background:#fff;"></div>
<svg class="a" style="left:288px;top:105px;" width="289" height="204" viewBox="0 0 289 204"><defs><pattern id="dp" x="1" y="2" width="4" height="4" patternUnits="userSpaceOnUse"><rect x="0" y="0" width="1" height="1" fill="#707070"/></pattern></defs><rect width="289" height="204" fill="#efebe7"/><rect width="289" height="204" fill="url(#dp)"/></svg>
<div class="a" style="left:307px;top:105px;width:250px;height:201.5px;background:#fff;"></div>
<svg class="a" style="left:282px;top:81px;" width="300" height="232" viewBox="282 81 300 232"><g stroke="#000" stroke-width="1" fill="#d3d3d3" stroke-linejoin="miter">
<path d="M432.5 127.5L512.5 187.5L432.5 247.5L352.5 187.5Z"/>
<path d="M432.5 247.5L482.5 272.5H382.5Z"/>
<path d="M432.5 127.5V247.5M352.5 187.5H512.5" fill="none"/>
</g>
<g stroke="#168a8a" stroke-width="1" fill="#f6f12c">
<path d="M428.5 181L421.6 159C420.500 151 426 146 432.5 146C439 146 444.500 151 443.400 159L436.500 181Z"/>
<path d="M428.5 194L421.6 214C420.500 221.500 426 226 432.5 226C439 226 444.500 221.500 443.400 214L436.500 194Z"/>
<path d="M426 183.500L405 176.600C397.500 175.500 393.500 181 393.500 187.500C393.500 194 397.500 199.500 405 198.400L426 191.500Z"/>
<path d="M439 183.500L460 176.600C467 175.500 471 181 471 187.500C471 194 467 199.500 460 198.400L439 191.500Z"/>
<circle cx="432.5" cy="187.5" r="9.5" fill="#f22e2e"/>
</g>
<path d="M432.5 127.5V247.5M352.5 187.5H512.5" fill="none" stroke="#000" stroke-width="0.6" opacity="0.55"/>
</svg>
<div class="a" style="left:309px;top:124px;width:6px;height:6px;background:#98ee90;border:1px solid #000;"></div>
<div class="a" style="left:344px;top:124px;width:6px;height:6px;background:#98ee90;border:1px solid #000;"></div>
<div class="a" style="left:379px;top:124px;width:6px;height:6px;background:#98ee90;border:1px solid #000;"></div>
<div class="a" style="left:309px;top:141px;width:6px;height:6px;background:#98ee90;border:1px solid #000;"></div>
<div class="a" style="left:379px;top:141px;width:6px;height:6px;background:#98ee90;border:1px solid #000;"></div>
<div class="a" style="left:309px;top:158px;width:6px;height:6px;background:#98ee90;border:1px solid #000;"></div>
<div class="a" style="left:344px;top:158px;width:6px;height:6px;background:#98ee90;border:1px solid #000;"></div>
<div class="a" style="left:379px;top:158px;width:6px;height:6px;background:#98ee90;border:1px solid #000;"></div>
<div class="t " style="left:337px;top:139px;font-family:'Liberation Sans',sans-serif;font-size:10px;letter-spacing:0.25px;color:#000;line-height:13px;">Text</div>
<div class="a" style="left:455px;top:200px;width:259px;height:316px;background:#1c4a84;border-radius:3px 4px 0 0;"></div>
<div class="a" style="left:456px;top:201px;width:257px;height:314px;background:linear-gradient(90deg,#5b9de3 0,#3d80cf 1.500px,#3a7ccb calc(100% - 2px),#4a8edb calc(100% - 1px));border-radius:2px 3px 0 0;"></div>
<div class="a" style="left:457px;top:512px;width:255px;height:3px;background:linear-gradient(#3a7ecc,#4b8fdc);"></div>
<div class="a" style="left:457px;top:201px;width:255px;height:24px;background:linear-gradient(#5196de 0,#4585d1 3px,#3d7ecc 60%,#3a79c7 100%);border-radius:2px 3px 0 0;"></div>
<div class="a" style="left:459px;top:225px;width:251px;height:287px;background:#efebe7;border-left:1px solid #fbf7f2;border-top:1px solid #fbf7f2;"></div>
<svg class="a" style="left:462px;top:205px;" width="17" height="17" viewBox="0 0 17 17"><defs><radialGradient id="gdlg" cx="0.350" cy="0.300" r="0.800"><stop offset="0" stop-color="#5a8af0"/><stop offset="1" stop-color="#1c3cb0"/></radialGradient></defs><circle cx="8" cy="8" r="7.700" fill="url(#gdlg)"/><rect x="2.800" y="2.800" width="7.500" height="4.500" rx="0.600" fill="#0c0c0c"/><rect x="4" y="4" width="5" height="1.800" fill="#22b422"/><circle cx="3.300" cy="12.700" r="3" fill="#c4d068" stroke="#8a9438" stroke-width="0.400"/><path d="M1.500 14l4-2.800M2.500 11l2 3.500" stroke="#333" stroke-width="0.800"/><path d="M6.500 6.500a2.200 2.200 0 0 0 2.500 3.200l4.500 5 1.800-1.700-4.800-4.700a2.200 2.200 0 0 0-2.800-2.800l1.300 1.500-1 1z" fill="#c8c8c8" stroke="#7a7a7a" stroke-width="0.600"/></svg>
<div class="t " style="left:486px;top:206px;font-weight:bold;font-size:13px;color:#fff;line-height:16px;letter-spacing:0;text-shadow:1px 1px 0 #1d4c8c;">Selecting a font</div>
<div class="a" style="left:630px;top:205px;width:18px;height:18px;border:1px solid rgba(40,90,160,0.45);border-radius:4px;background:linear-gradient(rgba(255,255,255,0.2),rgba(255,255,255,0.13));"></div>
<div class="a" style="left:650px;top:205px;width:18px;height:18px;border:1px solid rgba(40,90,160,0.45);border-radius:4px;background:linear-gradient(rgba(255,255,255,0.2),rgba(255,255,255,0.13));"></div>
<div class="a" style="left:670px;top:205px;width:18px;height:18px;border:1px solid rgba(40,90,160,0.45);border-radius:4px;background:linear-gradient(rgba(255,255,255,0.2),rgba(255,255,255,0.13));"></div>
<div class="a" style="left:690px;top:205px;width:18px;height:18px;border:1px solid rgba(40,90,160,0.45);border-radius:4px;background:linear-gradient(rgba(255,255,255,0.2),rgba(255,255,255,0.13));"></div>
<div class="t " style="left:634.5px;top:206px;font-weight:bold;font-size:13px;color:#fff;line-height:16px;letter-spacing:0;">?</div>
<svg class="a" style="left:650px;top:205px;" width="18" height="17" viewBox="0 0 18 17"><path d="M4.5 12h9" stroke="#fff" stroke-width="2"/></svg>
<svg class="a" style="left:670px;top:205px;" width="18" height="17" viewBox="0 0 18 17"><rect x="4.5" y="4.500" width="9" height="8" fill="none" stroke="#fff" stroke-width="1.2"/><path d="M4 4.800h10" stroke="#fff" stroke-width="1.8"/></svg>
<svg class="a" style="left:690px;top:205px;" width="18" height="17" viewBox="0 0 18 17"><path d="M5 4.500l8 8M13 4.500l-8 8" stroke="#fff" stroke-width="2.2"/></svg>
<div class="t " style="left:469px;top:235px;">Font:</div>
<div class="a" style="left:469px;top:255px;width:231px;height:22px;background:#fff;border:1px solid #b0aca6;border-radius:3px;"></div>
<div class="a" style="left:679px;top:256px;width:20px;height:20px;background:linear-gradient(#fbfaf9,#e9e6e2);border-left:1px solid #c6c2bc;border-radius:0 2px 2px 0;"></div>
<svg class="a" style="left:679px;top:256px;" width="20" height="20" viewBox="0 0 20 20"><path d="M6 8h8l-4 4.500z" fill="#444"/></svg>
<div class="t " style="left:473px;top:259px;">Arial</div>
<div class="t " style="left:469px;top:283px;letter-spacing:-0.4px;">Size:</div>
<div class="t " style="left:576px;top:284px;letter-spacing:0;">Sample:</div>
<div class="a" style="left:469px;top:304px;width:101px;height:21px;background:#fff;border:1px solid #b0aca6;border-radius:3px;"></div>
<div class="a" style="left:555px;top:305px;width:14px;height:19px;background:linear-gradient(#fbfaf9,#e9e6e2);border-left:1px solid #c6c2bc;border-radius:0 2px 2px 0;"></div>
<svg class="a" style="left:555px;top:305px;" width="14" height="19" viewBox="0 0 14 19"><path d="M3.500 8h7l-3.500-4.500z" fill="#444"/><path d="M3.500 11h7l-3.500 4.500z" fill="#444"/></svg>
<div class="t " style="left:474px;top:308px;">14</div>
<div class="t " style="left:469px;top:333px;letter-spacing:-0.1px;">Style:</div>
<div class="grp" style="left:470px;top:350px;width:100px;height:113px"></div>
<div class="grp" style="left:577px;top:301px;width:123px;height:162px"></div>
<div class="cb" style="left:477px;top:360px"></div>
<div class="t " style="left:496px;top:360px;">Bold</div>
<div class="cb" style="left:477px;top:386px"></div>
<div class="t " style="left:496px;top:386px;">Italic</div>
<div class="cb" style="left:477px;top:412px"></div>
<div class="t " style="left:496px;top:412px;">Strikeout</div>
<div class="cb" style="left:477px;top:438px"></div>
<div class="t " style="left:496px;top:438px;">Underline</div>
<svg class="a" style="left:477px;top:360px;" width="13" height="13" viewBox="0 0 13 13"><path d="M3.500 7l2.200 3.300 3.800-7.300" stroke="#111" stroke-width="1.9" fill="none"/></svg>
<div class="a" style="left:584px;top:308px;width:108px;height:147px;background:#fff;border:1px solid #b0aca6;border-radius:3px;"></div>
<div class="a" style="left:585px;top:309px;width:106px;height:145px;overflow:hidden">
<div class="t " style="left:-1.8px;top:64.6px;font-family:'Liberation Sans',sans-serif;font-weight:bold;font-size:14px;letter-spacing:0.2px;color:#000;line-height:16px;">AaBbCcDdEeFf</div>
</div>
<div class="a" style="left:469px;top:470px;width:231px;height:1px;background:#b9b5af;"></div>
<div class="a" style="left:469px;top:471px;width:231px;height:1px;background:#fbfaf9;"></div>
<div class="a" style="left:534px;top:478px;width:80px;height:24px;border:1px solid #3a76b8;border-radius:4px;background:linear-gradient(#fcfdfe,#e8edf3);box-shadow:inset 0 0 0 1px #b4d0ea;"></div>
<div class="btn" style="left:620px;top:478px;width:80px;height:24px;"></div>
<svg class="a" style="left:556px;top:482px;" width="18" height="16" viewBox="0 0 18 16"><path d="M1 8.500l2.500-1.500 3.500 3.800c2.500-4 5.500-7 10-9.300l0.500 1.300c-5 3.500-8 7.500-10 12.500l-2.500 0.400c-1-2.800-2.200-5-4-7.200z" fill="#2fd32f" stroke="#18a018" stroke-width="0.6"/></svg>
<div class="t " style="left:574px;top:483px;">Ok</div>
<svg class="a" style="left:629px;top:482px;" width="18" height="17" viewBox="0 0 18 17"><path d="M2 3l3-2 4 4.500 4.500-4.500 3 2.500-4.500 5 4.500 5.500-3 2.500-4.500-5-4.500 5-3-2.500 4.500-5.500z" fill="#ee2e2e" stroke="#b01818" stroke-width="0.7"/></svg>
<div class="t " style="left:647px;top:483px;">Cancel</div>
<svg class="a" style="left:610px;top:214.5px;" width="14" height="22" viewBox="0 0 14 22"><path d="M1.500 1.500v15l3.500-3.500 2.800 6.500 2.700-1.200-2.800-6.300h5z" fill="#000" stroke="#fff" stroke-width="1.100" stroke-linejoin="round"/></svg>
<div class="a" style="left:4px;top:517px;width:786px;height:35px;background:#efebe7;"></div>
<svg class="a" style="left:9px;top:526px;" width="5" height="17" viewBox="0 0 5 17"><rect x="0" y="0" width="1" height="1" fill="#a8a49e"/><rect x="3" y="0" width="1" height="1" fill="#a8a49e"/><rect x="0" y="3" width="1" height="1" fill="#a8a49e"/><rect x="3" y="3" width="1" height="1" fill="#a8a49e"/><rect x="0" y="6" width="1" height="1" fill="#a8a49e"/><rect x="3" y="6" width="1" height="1" fill="#a8a49e"/><rect x="0" y="9" width="1" height="1" fill="#a8a49e"/><rect x="3" y="9" width="1" height="1" fill="#a8a49e"/><rect x="0" y="12" width="1" height="1" fill="#a8a49e"/><rect x="3" y="12" width="1" height="1" fill="#a8a49e"/><rect x="0" y="15" width="1" height="1" fill="#a8a49e"/><rect x="3" y="15" width="1" height="1" fill="#a8a49e"/></svg>
<svg class="a" style="left:0px;top:517px;" width="340" height="35" viewBox="0 0 340 35"><rect x="22.5" y="7.5" width="15" height="15" fill="url(#ggsq)" stroke="#a0a0a0" stroke-width="0.600"/><rect x="26.5" y="10.5" width="16" height="17" fill="url(#gsq)" stroke="#5050d0" stroke-width="0.600"/><rect x="57.5" y="10.5" width="16" height="17" fill="url(#gsq)" stroke="#5050d0" stroke-width="0.600"/><rect x="53.5" y="7.5" width="16" height="15" fill="url(#ggsq)" stroke="#a0a0a0" stroke-width="0.600"/><rect x="83.5" y="6.5" width="10" height="10" fill="url(#ggsq)" stroke="#a0a0a0" stroke-width="0.600"/><rect x="94.5" y="17.5" width="10" height="10" fill="url(#ggsq)" stroke="#a0a0a0" stroke-width="0.600"/><rect x="89.5" y="12.5" width="10" height="10" fill="url(#gsq)" stroke="#5050d0" stroke-width="0.600"/><rect x="114.5" y="6.5" width="10" height="10" fill="url(#ggsq)" stroke="#a0a0a0" stroke-width="0.600"/><rect x="121.5" y="12.5" width="10" height="10" fill="url(#gsq)" stroke="#5050d0" stroke-width="0.600"/><rect x="125.5" y="17.5" width="10" height="10" fill="url(#ggsq)" stroke="#a0a0a0" stroke-width="0.600"/><path d="M144.500 9v17" stroke="#cfcbc5"/><path d="M145.500 9v17" stroke="#fbfaf9"/><path d="M153.500 6.500v21" stroke="#000" stroke-width="1.400"/><rect x="156.5" y="8.5" width="14" height="7" fill="url(#gyel)" stroke="#d0a010" stroke-width="0.600"/><rect x="156.5" y="17.5" width="17" height="9.5" fill="url(#gsq)" stroke="#5050d0" stroke-width="0.600"/><path d="M193.500 6.500v21" stroke="#000" stroke-width="1.400"/><rect x="187.5" y="8.5" width="13" height="7" fill="url(#gyel)" stroke="#d0a010" stroke-width="0.600"/><rect x="185.5" y="17.5" width="17" height="9.5" fill="url(#gsq)" stroke="#5050d0" stroke-width="0.600"/><path d="M234.500 6.500v21" stroke="#000" stroke-width="1.400"/><rect x="218.5" y="8.5" width="13.5" height="7" fill="url(#gyel)" stroke="#d0a010" stroke-width="0.600"/><rect x="215.5" y="17.5" width="16.5" height="9.5" fill="url(#gsq)" stroke="#5050d0" stroke-width="0.600"/><path d="M245 7.500h21" stroke="#000" stroke-width="1.400"/><rect x="247.5" y="9.5" width="8" height="14.5" fill="url(#gyel)" stroke="#d0a010" stroke-width="0.600"/><rect x="257.5" y="9.5" width="7.5" height="17" fill="url(#gsq)" stroke="#5050d0" stroke-width="0.600"/><path d="M276 17.500h22" stroke="#000" stroke-width="1.400"/><rect x="278.5" y="10.5" width="8" height="14" fill="url(#gyel)" stroke="#d0a010" stroke-width="0.600"/><rect x="288.5" y="8.5" width="7.5" height="18" fill="url(#gsq)" stroke="#5050d0" stroke-width="0.600"/><path d="M308 26.500h21" stroke="#000" stroke-width="1.400"/><rect x="309.5" y="10.5" width="8" height="15" fill="url(#gyel)" stroke="#d0a010" stroke-width="0.600"/><rect x="319.5" y="7.5" width="7.5" height="18" fill="url(#gsq)" stroke="#5050d0" stroke-width="0.600"/></svg>
<div class="a" style="left:4px;top:552px;width:786px;height:1px;background:#b9b5af;"></div>
<div class="t " style="left:632px;top:558px;">100%</div>
<div class="t " style="left:673px;top:558px;">*</div>
<div class="t " style="left:685px;top:558px;">Resize</div>
<div class="t " style="left:730px;top:558px;">.</div>
<div class="t " style="left:740px;top:557px;color:#f00;">root</div>
<svg class="a" style="left:778px;top:563px;" width="11" height="11" viewBox="0 0 11 11"><rect x="0.500" y="9.500" width="1" height="1" fill="#fff"/><rect x="0" y="9" width="1" height="1" fill="#9a9690"/><rect x="3.500" y="6.500" width="1" height="1" fill="#fff"/><rect x="3" y="6" width="1" height="1" fill="#9a9690"/><rect x="3.500" y="9.500" width="1" height="1" fill="#fff"/><rect x="3" y="9" width="1" height="1" fill="#9a9690"/><rect x="6.500" y="3.500" width="1" height="1" fill="#fff"/><rect x="6" y="3" width="1" height="1" fill="#9a9690"/><rect x="6.500" y="6.500" width="1" height="1" fill="#fff"/><rect x="6" y="6" width="1" height="1" fill="#9a9690"/><rect x="6.500" y="9.500" width="1" height="1" fill="#fff"/><rect x="6" y="9" width="1" height="1" fill="#9a9690"/><rect x="9.500" y="0.500" width="1" height="1" fill="#fff"/><rect x="9" y="0" width="1" height="1" fill="#9a9690"/><rect x="9.500" y="3.500" width="1" height="1" fill="#fff"/><rect x="9" y="3" width="1" height="1" fill="#9a9690"/><rect x="9.500" y="6.500" width="1" height="1" fill="#fff"/><rect x="9" y="6" width="1" height="1" fill="#9a9690"/><rect x="9.500" y="9.500" width="1" height="1" fill="#fff"/><rect x="9" y="9" width="1" height="1" fill="#9a9690"/></svg>
</body></html>
